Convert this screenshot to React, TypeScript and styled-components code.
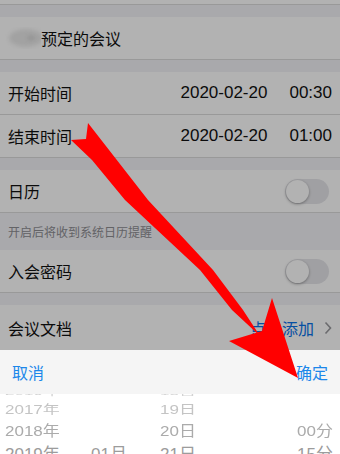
import styled, { createGlobalStyle } from 'styled-components';

const GlobalStyle = createGlobalStyle`
  html, body {
    margin: 0;
    padding: 0;
    background: #fff;
  }
  body {
    font-family: "Liberation Sans", "Noto Sans CJK SC", sans-serif;
  }
`;

const Page = styled.div`
  position: relative;
  width: 340px;
  height: 454px;
  overflow: hidden;
  display: flex;
  flex-direction: column;
`;

const Settings = styled.div`
  position: relative;
  flex: 1;
  background: #f2f2f6;
  overflow: hidden;
`;

const Mask = styled.div`
  position: absolute;
  inset: 0;
  background: rgba(0, 0, 0, 0.3);
`;

const Gap = styled.div<{ h: number }>`
  height: ${(p) => p.h}px;
`;

const Row = styled.div<{ h?: number; last?: boolean }>`
  height: ${(p) => p.h ?? 42}px;
  background: #fff;
  border-bottom: ${(p) => (p.last ? 'none' : '1px solid #dcdcdc')};
  display: flex;
  align-items: center;
  justify-content: space-between;
  padding: 0 8px;
`;

const Label = styled.span`
  font-size: 16px;
  color: #111;
  display: flex;
  align-items: center;
`;

const Blob = styled.div`
  width: 36px;
  height: 22px;
  margin-left: -3px;
  background: #ffffff;
  position: relative;
  overflow: hidden;

  &::before {
    content: '';
    position: absolute;
    left: 4px;
    top: 2px;
    width: 34px;
    height: 18px;
    border-radius: 50%;
    background: #e8e8e8;
    filter: blur(2px);
  }

  &::after {
    content: '';
    position: absolute;
    left: 22px;
    top: 8px;
    width: 8px;
    height: 6px;
    border-radius: 50%;
    background: #dadada;
    filter: blur(1.5px);
  }
`;

const Value = styled.span`
  display: flex;
  gap: 22px;
  font-size: 17px;
  color: #111;
`;

const Hint = styled.div`
  height: 37px;
  display: flex;
  align-items: center;
  padding-left: 8px;
  font-size: 12px;
  color: #8e8e93;
`;

const Switch = styled.div`
  position: relative;
  width: 44px;
  height: 25px;
  margin-right: 3px;
  border-radius: 13px;
  background: #e6e6ea;

  &::after {
    content: '';
    position: absolute;
    left: 1px;
    top: 1px;
    width: 23px;
    height: 23px;
    border-radius: 50%;
    background: #fff;
    box-shadow: 0 1px 3px rgba(0, 0, 0, 0.35);
  }
`;

const Link = styled.span`
  display: flex;
  align-items: center;
  gap: 10px;
  font-size: 16px;
  color: #0a72e8;
`;

const Sheet = styled.div`
  display: flex;
  flex-direction: column;
  height: 104px;
`;

const ActionBar = styled.div`
  height: 44px;
  background: #f5f5f5;
  display: flex;
  align-items: center;
  justify-content: space-between;
  padding: 0 12px;
`;

const ActionButton = styled.span`
  font-size: 16px;
  color: #1c87ea;
`;

const Picker = styled.div`
  flex: 1;
  background: #fff;
  overflow: hidden;
`;

const Wheel = styled.div`
  margin-top: -10px;
`;

const WheelRow = styled.div<{ h: number; squash: number; tone: string }>`
  height: ${(p) => p.h}px;
  display: grid;
  grid-template-columns: 86px 69px 1fr auto;
  align-items: center;
  padding: 0 7px 0 5px;
  font-size: 17px;
  color: ${(p) => p.tone};
  transform: scaleY(${(p) => p.squash});
  line-height: 1;
`;

const Overlay = styled.svg`
  position: absolute;
  inset: 0;
  pointer-events: none;
`;

const Chevron = () => (
  <svg width="8" height="14" viewBox="0 0 8 14">
    <polyline points="1.5,1.5 6.5,7 1.5,12.5" fill="none" stroke="#9a9a9e" strokeWidth="1.6" />
  </svg>
);

const wheelRows = [
  { h: 16, squash: 0.45, tone: '#d2d2d2', cells: ['2016年', '', '18日', ''] },
  { h: 20, squash: 0.72, tone: '#c4c4c4', cells: ['2017年', '', '19日', ''] },
  { h: 22, squash: 0.88, tone: '#ababab', cells: ['2018年', '', '20日', '00分'] },
  { h: 24, squash: 1, tone: '#9c9c9c', cells: ['2019年', '01月', '21日', '15分'] },
];

export default function App() {
  return (
    <>
      <GlobalStyle />
      <Page>
        <Settings>
          <Row h={4} />
          <Gap h={12} />
          <Row>
            <Label>
              <Blob />
              预定的会议
            </Label>
          </Row>
          <Gap h={12} />
          <Row>
            <Label>开始时间</Label>
            <Value>
              <span>2020-02-20</span>
              <span>00:30</span>
            </Value>
          </Row>
          <Row>
            <Label>结束时间</Label>
            <Value>
              <span>2020-02-20</span>
              <span>01:00</span>
            </Value>
          </Row>
          <Gap h={12} />
          <Row>
            <Label>日历</Label>
            <Switch />
          </Row>
          <Hint>开启后将收到系统日历提醒</Hint>
          <Row>
            <Label>入会密码</Label>
            <Switch />
          </Row>
          <Gap h={12} />
          <Row h={45} last>
            <Label>会议文档</Label>
            <Link>
              点击添加
              <Chevron />
            </Link>
          </Row>
          <Mask />
        </Settings>
        <Sheet>
          <ActionBar>
            <ActionButton>取消</ActionButton>
            <ActionButton>确定</ActionButton>
          </ActionBar>
          <Picker>
            <Wheel>
              {wheelRows.map((r) => (
                <WheelRow key={r.cells[0]} h={r.h} squash={r.squash} tone={r.tone}>
                  <span>{r.cells[0]}</span>
                  <span>{r.cells[1]}</span>
                  <span>{r.cells[2]}</span>
                  <span>{r.cells[3]}</span>
                </WheelRow>
              ))}
            </Wheel>
          </Picker>
        </Sheet>
        <Overlay width="340" height="454" viewBox="0 0 340 454">
          <polygon
            fill="#ff0000"
            points="71,140 86,139 88,123 148,200 213,270 243,310 260,336 232,310 200,270 125,200 92,160"
          />
          <polygon fill="#ff0000" points="272,298 298,378 229,341 262,331" />
        </Overlay>
      </Page>
    </>
  );
}
